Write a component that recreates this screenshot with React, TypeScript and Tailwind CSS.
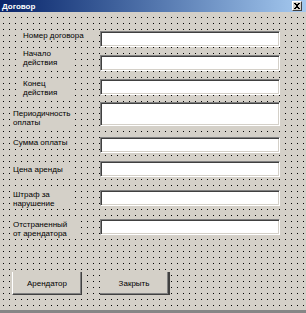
import React from 'react'

const rows = [
  { lines: ['Номер договора'], x: 20, w: 76, off: 0, gap: 0, h: 16 },
  { lines: ['Начало', 'действия'], x: 20, w: 50, off: -6, gap: 8, h: 16 },
  { lines: ['Конец', 'действия'], x: 20, w: 50, off: 0, gap: 8, h: 16 },
  { lines: ['Периодичность', 'оплаты'], x: 10, w: 62, off: 7, gap: 7, h: 24 },
  { lines: ['Сумма оплаты'], x: 10, w: 62, off: 1, gap: 11, h: 16 },
  { lines: ['Цена аренды'], x: 10, w: 62, off: 4, gap: 8, h: 16 },
  { lines: ['Штраф за', 'нарушение'], x: 10, w: 62, off: 0, gap: 13, h: 16 },
  { lines: ['Отстраненный', 'от арендатора'], x: 10, w: 66, off: 1, gap: 13, h: 16 },
]

function TextBox({ h }: { h: number }) {
  return (
    <div
      className="w-[180px] bg-white border border-t-[#808080] border-l-[#808080] border-r-white border-b-white shadow-[inset_1px_1px_0_#404040,inset_-1px_-1px_0_#d4d0c8]"
      style={{ height: h }}
    />
  )
}

export default function App() {
  return (
    <div className="w-[306px] h-[313px] flex flex-col bg-[#d4d0c8] text-black font-['Liberation_Sans',Arial,sans-serif] text-[8px] leading-[9px] overflow-hidden">
      {/* title bar */}
      <div className="h-[12px] shrink-0 flex items-center justify-between bg-gradient-to-r from-[#0a246a] to-[#a6caf0] pl-[2px] pr-[4px]">
        <span className="text-white font-bold text-[8px] leading-[9px]">Договор</span>
        <div className="w-[10px] h-[10px] bg-[#d4d0c8] border border-t-white border-l-white border-r-[#404040] border-b-[#404040] flex items-center justify-center">
          <svg width="6" height="6" viewBox="0 0 6 6" shapeRendering="crispEdges">
            <path d="M0 0h2v1h-2zM4 0h2v1h-2zM1 1h4v1h-4zM2 2h2v2h-2zM1 4h4v1h-4zM0 5h2v1h-2zM4 5h2v1h-2z" fill="#000" />
          </svg>
        </div>
      </div>

      {/* form body with design grid */}
      <div className="flex-1 flex flex-col pt-[19px] bg-[conic-gradient(at_1px_1px,transparent_75%,#000_0)] bg-[length:6px_6px] bg-[position:3px_5px]">
        {rows.map((r, i) => (
          <div key={i} className="flex items-start shrink-0" style={{ marginTop: r.gap, height: r.h }}>
            <div className="w-[100px] shrink-0 h-full">
              <div
                className="bg-[#d4d0c8] pl-[3px] whitespace-nowrap"
                style={{ marginLeft: r.x, width: r.w, marginTop: r.off }}
              >
                {r.lines.map((l) => (
                  <div key={l}>{l}</div>
                ))}
              </div>
            </div>
            <TextBox h={r.h} />
          </div>
        ))}

        <div className="flex pl-[12px] gap-[18px] mt-[37px]">
          <div className="w-[70px] h-[23px] bg-[#d4d0c8] border-l border-l-white border-r border-b border-r-[#404040] border-b-[#404040] shadow-[inset_-1px_-1px_0_#808080] flex items-center justify-center">
            Арендатор
          </div>
          <div className="w-[70px] h-[23px] bg-[#d4d0c8] border-r-2 border-b border-r-[#404040] border-b-[#404040] shadow-[inset_-1px_-1px_0_#808080] flex items-center justify-center">
            Закрыть
          </div>
        </div>
      </div>
      <div className="h-[3px] shrink-0 bg-[#868686]" />
    </div>
  )
}
